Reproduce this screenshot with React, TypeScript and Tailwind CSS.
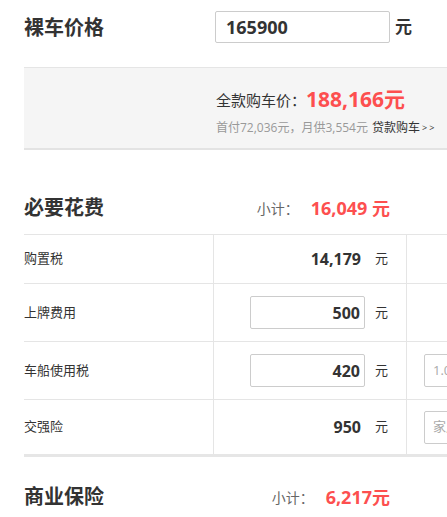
const font = { fontFamily: '"Open Sans", "Noto Sans CJK SC", sans-serif' };

type Row = {
  label: string;
  value: string;
  editable?: boolean;
  height: string;
  extra?: string;
};

const rows: Row[] = [
  { label: '购置税', value: '14,179', height: 'h-[48px]' },
  { label: '上牌费用', value: '500', editable: true, height: 'h-[58px]' },
  { label: '车船使用税', value: '420', editable: true, height: 'h-[58px]', extra: '1.0-1.6L(含)' },
  { label: '交强险', value: '950', height: 'h-[55px]', extra: '家用6座以下' },
];

const SectionHeader = ({ title, total, className }: { title: string; total: string; className: string }) => (
  <div className={`flex h-[52px] w-[366px] items-center justify-between ${className}`}>
    <h2 className="text-[20px] font-bold text-[#333]">{title}</h2>
    <div className="flex items-center">
      <span className="text-[14px] text-[#666]">小计：</span>
      <span className="ml-[12px] text-[18px] font-bold text-[#fd4f4f]">{total}</span>
    </div>
  </div>
);

const App = () => {
  return (
    <div className="h-[517px] w-[447px] overflow-hidden bg-white" style={font}>
      <div className="w-[640px] pl-6">
        {/* 裸车价格 */}
        <div className="flex h-[67px] items-start pt-[11px]">
          <h1 className="w-[191px] pt-[2px] text-[20px] leading-[30px] font-bold text-[#333]">裸车价格</h1>
          <input
            readOnly
            value="165900"
            className="h-[32px] w-[175px] rounded-[2px] border border-[#ccc] pl-[10px] text-[18px] font-bold text-[#333] outline-none"
          />
          <span className="ml-[5px] text-[17px] leading-[32px] font-bold text-[#333]">元</span>
        </div>

        {/* 全款 */}
        <div className="h-[83px] border-t border-b-2 border-t-[#e5e5e5] border-b-[#e3e3e3] bg-[#f5f5f5] pt-[18px] pl-[192px]">
          <div className="flex h-[28px] items-center">
            <span className="text-[15px] text-[#333]">全款购车价：</span>
            <span className="text-[21px] font-bold text-[#fd4f4f]">188,166元</span>
          </div>
          <div className="mt-[4px] flex h-[20px] items-center text-[12px]">
            <span className="text-[#999]">首付72,036元，月供3,554元</span>
            <span className="ml-[4px] text-[#333]">贷款购车</span>
            <span className="ml-[2px] text-[9px] tracking-[2px] text-[#333]">&gt;&gt;</span>
          </div>
        </div>

        {/* 必要花费 */}
        <SectionHeader title="必要花费" total="16,049 元" className="mt-[32px]" />
        <div className="border-t border-b-[3px] border-t-[#e5e5e5] border-b-[#e6e6e6]">
          {rows.map((r, i) => (
            <div
              key={r.label}
              className={`grid grid-cols-[190px_193px_1fr] ${r.height} ${i > 0 ? 'border-t border-[#e5e5e5]' : ''}`}
            >
              <div className="flex items-center border-r border-[#e5e5e5] text-[13px] text-[#333]">{r.label}</div>
              <div className="flex items-center justify-end border-r border-[#e5e5e5] pr-[18px]">
                {r.editable ? (
                  <input
                    readOnly
                    value={r.value}
                    className="h-[33px] w-[115px] rounded-[2px] border border-[#ccc] pr-[4px] text-right text-[16px] font-bold text-[#333] outline-none"
                  />
                ) : (
                  <span className="pr-[4px] text-[16px] font-bold text-[#333]">{r.value}</span>
                )}
                <span className="ml-[10px] text-[13px] text-[#333]">元</span>
              </div>
              <div className="flex items-center pl-[17px]">
                {r.extra && (
                  <div className="flex h-[33px] w-[140px] items-center rounded-[2px] border border-[#ccc] pl-[8px] text-[13px] text-[#aaa]">
                    {r.extra}
                  </div>
                )}
              </div>
            </div>
          ))}
        </div>

        {/* 商业保险 */}
        <SectionHeader title="商业保险" total="6,217元" className="mt-[14px]" />
      </div>
    </div>
  );
};

export default App;
